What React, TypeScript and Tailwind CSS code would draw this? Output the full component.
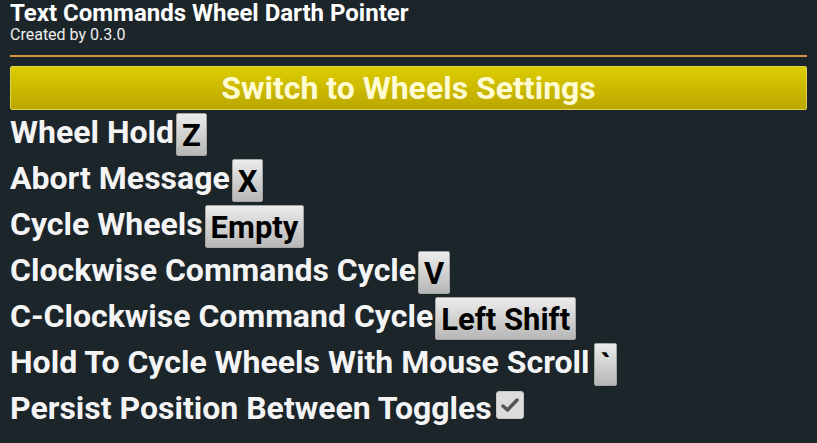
import React from "react";

const Key = ({ label }: { label: string }) => (
  <span className="inline-flex h-[43px] items-center rounded-[2px] border border-[#a5a5a5] bg-gradient-to-b from-[#ececec] to-[#b7b7b7] px-[5px] pt-[1px] text-[31px] font-bold leading-none text-black">
    {label}
  </span>
);

const Row = ({ label, children, gap = "ml-[2px]" }: { label: string; children: React.ReactNode; gap?: string }) => (
  <div className="flex h-[46px] items-start">
    <span className="text-[32px] font-bold leading-[40px] text-[#f4f4f4]">{label}</span>
    <span className={`${gap} mt-[1px]`}>{children}</span>
  </div>
);

export default function App() {
  return (
    <div
      className="h-[443px] w-[817px] overflow-hidden bg-[#1b252a] px-[10px]"
      style={{ fontFamily: "Roboto, 'Noto Sans', sans-serif" }}
    >
      <div className="text-[24px] font-bold leading-[27px] text-white">Text Commands Wheel Darth Pointer</div>
      <div className="text-[16px] leading-[16px] text-[#eeeeee]">Created by 0.3.0</div>
      <div className="mt-[12px] h-[2px] w-[797px] bg-[#d8963c]" />
      <div className="mt-[9px] flex h-[44px] w-[797px] items-center justify-center rounded-[2px] border border-[#e2d250] bg-gradient-to-b from-[#dccd00] to-[#bca700] text-[32px] font-bold text-[#fffbd2]">
        Switch to Wheels Settings
      </div>
      <div className="mt-[2px] flex flex-col">
        <Row label="Wheel Hold"><Key label="Z" /></Row>
        <Row label="Abort Message"><Key label="X" /></Row>
        <Row label="Cycle Wheels"><Key label="Empty" /></Row>
        <Row label="Clockwise Commands Cycle"><Key label="V" /></Row>
        <Row label="C-Clockwise Command Cycle"><Key label="Left Shift" /></Row>
        <Row label="Hold To Cycle Wheels With Mouse Scroll" gap="ml-[5px]"><Key label="`" /></Row>
        <Row label="Persist Position Between Toggles" gap="ml-[4px]">
          <span className="mt-[2px] flex h-[28px] w-[28px] items-center justify-center rounded-[3px] border border-[#c4c4c4] bg-[#dcdcdc]">
            <svg width="20" height="18" viewBox="0 0 20 18">
              <path d="M3 10 L7.5 14 L17 4" stroke="#555" strokeWidth="3.5" fill="none" strokeLinecap="round" strokeLinejoin="round" />
            </svg>
          </span>
        </Row>
      </div>
    </div>
  );
}
